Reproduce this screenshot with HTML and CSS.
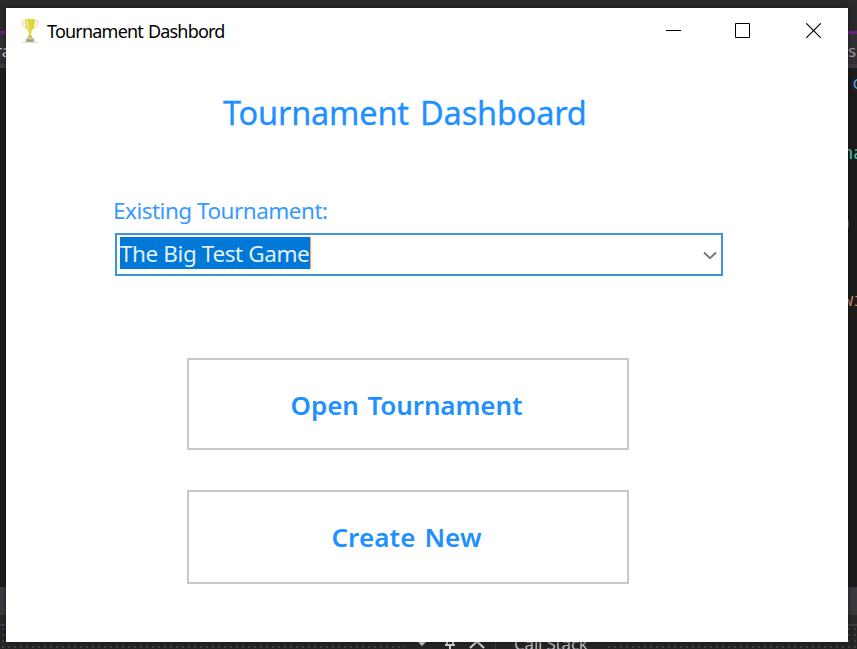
FILE: index.html
```html
<!DOCTYPE html>
<html lang="en">
<head>
<meta charset="utf-8">
<title>Tournament Dashbord</title>
<link rel="stylesheet" href="styles.css">
</head>
<body>
<div class="ide">
  <div class="ide-menu"></div>
  <div class="ide-accent"></div>
  <div class="ide-tabs"><span>ra</span><span class="tab-end">s</span></div>
  <div class="ide-rule"></div>
  <div class="ide-code">
    <span class="code blue">c</span>
    <span class="code teal">na</span>
    <span class="code olive">)</span>
    <span class="code orange">wi</span>
  </div>
  <div class="ide-scroll"></div>
  <div class="ide-gap"></div>
  <div class="ide-line"></div>
  <div class="ide-panel">
    <div class="dots dots-left"></div>
    <svg class="panel-icons" width="84" height="23" viewBox="0 0 84 23"><path d="M2 15h10l-5 5z" fill="#d0d0d0"/><path d="M30 19h10M32 10v9M38 10v9M35 19v5" stroke="#d0d0d0" stroke-width="2" fill="none"/><path d="M55 9l14 13M69 9l-14 13" stroke="#d0d0d0" stroke-width="2"/><path d="M80.500 14v9" stroke="#38383d"/></svg>
    <span class="callstack">Call Stack</span>
    <div class="dots dots-right"></div>
  </div>
</div>
<main class="window">
  <header class="titlebar">
    <svg class="trophy" width="20" height="25" viewBox="0 0 20 25"><path d="M5 3H2.500q-.5 6 5 8M15 3h2.500q.5 6-5 8" fill="none" stroke="#efecc0" stroke-width="2"/><path d="M5 1h10q0 9-3.500 12L10.800 18H9.200l-.7-5Q5 10 5 1z" fill="#ded63f"/><path d="M7 2q0 6 2 9" stroke="#f3ee9a" stroke-width="1.500" fill="none"/><path d="M8.500 17h3l1 3h-5z" fill="#d3c54c"/><path d="M6 20h8l1 4H5z" fill="#cfc6b4"/><path d="M7 21.500h6v2H7z" fill="#a2957c"/><path d="M2 24.500h16" stroke="#ddd"/></svg>
    <span class="caption">Tournament Dashbord</span>
    <svg class="controls" width="156" height="16" viewBox="0 0 156 16" fill="none" stroke="#000"><path d="M0 7.500h15"/><path d="M69.500.5h14v14h-14z"/><path d="M140.300.3l14.500 14.500M154.800.3l-14.500 14.500" stroke-width="1.100"/></svg>
  </header>
  <h1><span>Tournament Dashboard</span></h1>
  <label class="label" for="t"><span>Existing Tournament:</span></label>
  <div class="combo" id="t">
    <span class="selected"><span>The Big Test Game</span></span>
    <svg width="14" height="10" viewBox="0 0 14 10" fill="none" stroke="#7a7a7a" stroke-width="2"><path d="M1 1.500l6 5.700 6-5.700"/></svg>
  </div>
  <button class="open"><span>Open Tournament</span></button>
  <button class="create"><span>Create New</span></button>
</main>
</body>
</html>
```
FILE: styles.css
```css
* { box-sizing: border-box; }
body { margin: 0; width: 857px; height: 649px; overflow: hidden; background: #1e1e1e; font-family: "Noto Sans", "Open Sans", sans-serif; }
svg { display: block; flex: none; }
.ide { height: 649px; display: flex; flex-direction: column; overflow: hidden; }
.ide-menu { height: 31px; background: #2a2a2d; }
.ide-accent { height: 3px; background: #68217a; }
.ide-tabs { height: 30px; background: #303034; display: flex; justify-content: space-between; font-size: 17px; line-height: 34px; color: #c8c8c8; }
.ide-tabs span:first-child { margin-left: -5px; }
.tab-end { width: 9px; color: #999; }
.ide-rule { height: 4px; background: #3b3b3f; }
.ide-code { height: 519px; background: #1c1c1c; display: flex; flex-direction: column; align-items: flex-end; }
.code { font: 17px/30px "DejaVu Sans Mono", monospace; width: 12px; height: 30px; white-space: nowrap; }
.blue { color: #569cd6; width: 5px; }
.teal { color: #4ec9b0; margin-top: 40px; width: 14px; }
.olive { color: #8b6a43; margin-top: 41px; width: 15px; }
.orange { color: #c58a6a; margin-top: 46px; width: 14px; }
.ide-scroll { height: 28px; background: #39393e; }
.ide-gap { height: 9px; background: #29292b; }
.ide-line { height: 2px; background: #3c3c45; }
.ide-panel { height: 23px; background: #252528; display: flex; }
.dots { background: radial-gradient(circle, #404044 1px, transparent 1.400px) 0 0 / 6px 6px; height: 22px; }
.dots-left { width: 405px; margin-right: 10px; }
.callstack { font-size: 17px; line-height: 36px; width: 84px; margin-left: 15px; letter-spacing: -.2px; color: #b8b8b8; white-space: nowrap; }
.dots-right { flex: 1; margin-left: 8px; }

.window { position: absolute; left: 6px; top: 8px; width: 842px; height: 634px; background: #fff; color: #1e90ff; box-shadow: 0 0 4px #0008; display: flex; flex-direction: column; align-items: flex-start; }
.titlebar { height: 46px; width: 100%; display: flex; align-items: flex-start; padding: 10px 26px 0 14px; color: #000; }
.caption { margin-left: 7px; margin-top: -2px; font-size: 18px; line-height: 31px; letter-spacing: -.8px; word-spacing: 1px; white-space: nowrap; }
.controls { margin-left: auto; margin-top: 5px; }
h1 { margin: 37px 0 0 217px; font-size: 32.500px; font-weight: 400; line-height: 44px; height: 44px; white-space: nowrap; letter-spacing: -.2px; word-spacing: 3px; -webkit-text-stroke: .3px #1e90ff; }
.label { margin: 60px 0 0 107px; font-size: 22.500px; line-height: 32px; height: 32px; white-space: nowrap; letter-spacing: -.5px; opacity: .9; }
.combo { margin: 6px 0 0 109px; width: 608px; height: 43px; border: 2px solid #3c93dd; padding: 2px 4px 5px 3px; display: flex; justify-content: space-between; }
.selected { background: #0078d7; color: #e2f0fb; height: 32px; width: 191px; border-right: 1px solid #ff9d50; font-size: 22.500px; line-height: 33px; white-space: nowrap; letter-spacing: -.4px; }
.combo svg { margin-top: 14px; }
button { margin: 82px 0 0 181px; width: 442px; height: 92px; padding: 1px 3px 0 0; border: 2px solid #c9c9c9; background: #fff; color: #1e90ff; font: 600 26px/36px "Noto Sans", "Open Sans", sans-serif; letter-spacing: -.1px; word-spacing: 2px; }
.create { margin-top: 40px; height: 94px; padding-top: 0; letter-spacing: .1px; }
```
